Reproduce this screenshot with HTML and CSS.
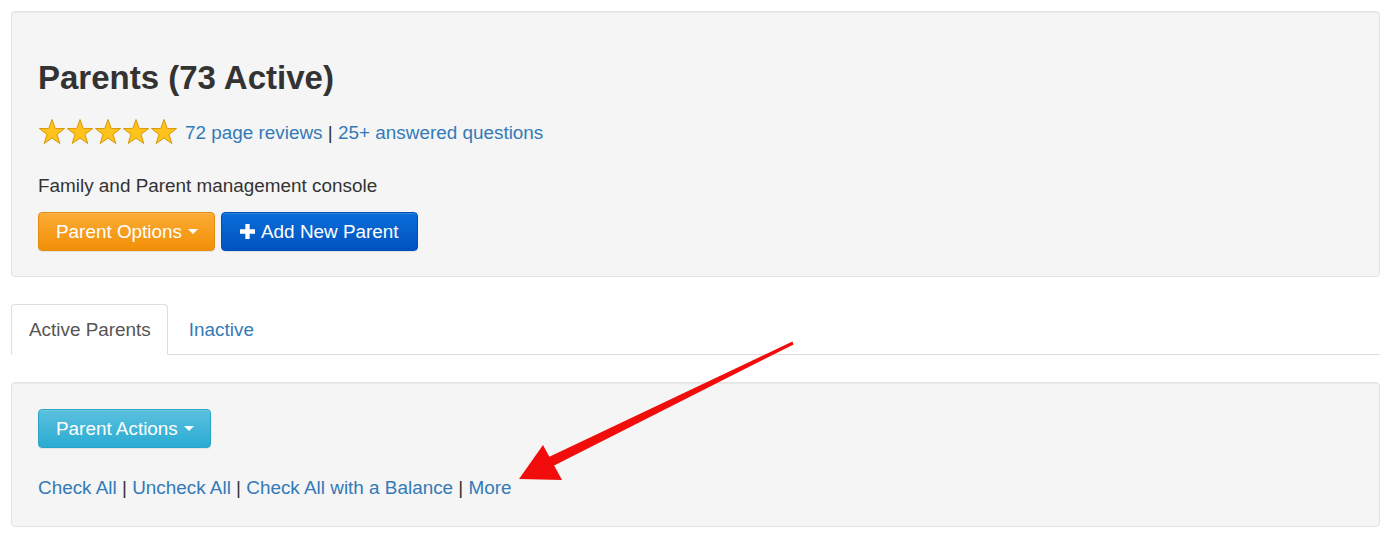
FILE: index.html
```html
<!DOCTYPE html>
<html lang="en">
<head>
    <meta charset="UTF-8">
    <title>Parents</title>
    <meta name="viewport" content="width=device-width, initial-scale=1.0">
    <link rel="stylesheet" href="styles.css">
</head>
<body>
    <div class="page">
        <!-- Header Well -->
        <section class="well well-header">
            <h2 class="page-title">Parents (73 Active)</h2>
            <div class="rating">
                <span class="stars">
                    <svg class="star" viewBox="0 0 28 28"><polygon points="14,1.5 17.2,10.4 26.6,10.6 19.1,16.4 21.8,25.5 14,20.1 6.2,25.5 8.9,16.4 1.4,10.6 10.8,10.4"/></svg>
                    <svg class="star" viewBox="0 0 28 28"><polygon points="14,1.5 17.2,10.4 26.6,10.6 19.1,16.4 21.8,25.5 14,20.1 6.2,25.5 8.9,16.4 1.4,10.6 10.8,10.4"/></svg>
                    <svg class="star" viewBox="0 0 28 28"><polygon points="14,1.5 17.2,10.4 26.6,10.6 19.1,16.4 21.8,25.5 14,20.1 6.2,25.5 8.9,16.4 1.4,10.6 10.8,10.4"/></svg>
                    <svg class="star" viewBox="0 0 28 28"><polygon points="14,1.5 17.2,10.4 26.6,10.6 19.1,16.4 21.8,25.5 14,20.1 6.2,25.5 8.9,16.4 1.4,10.6 10.8,10.4"/></svg>
                    <svg class="star" viewBox="0 0 28 28"><polygon points="14,1.5 17.2,10.4 26.6,10.6 19.1,16.4 21.8,25.5 14,20.1 6.2,25.5 8.9,16.4 1.4,10.6 10.8,10.4"/></svg>
                </span>
                <a href="#">72 page reviews</a>&nbsp;|&nbsp;<a href="#">25+ answered questions</a>
            </div>
            <p class="subtitle">Family and Parent management console</p>
            <div class="btn-row">
                <button class="btn btn-warning">Parent Options <span class="caret"></span></button>
                <button class="btn btn-primary">
                    <svg class="icon-plus" viewBox="0 0 14 14"><path d="M5 0h4v5h5v4H9v5H5V9H0V5h5z"/></svg>
                    Add New Parent
                </button>
            </div>
        </section>

        <!-- Tabs -->
        <ul class="nav-tabs">
            <li class="active"><a href="#">Active Parents</a></li>
            <li><a href="#">Inactive</a></li>
        </ul>

        <!-- Actions Well -->
        <section class="well well-actions">
            <button class="btn btn-info">Parent Actions <span class="caret"></span></button>
            <div class="check-links">
                <a href="#">Check All</a> | <a href="#">Uncheck All</a> | <a href="#">Check All with a Balance</a> | <a href="#">More</a>
            </div>
        </section>
    </div>

    <!-- Annotation arrow -->
    <svg class="annotation" width="1390" height="534" viewBox="0 0 1390 534">
        <polygon fill="#f20d0d" points="793.6,344.4 792.4,341.6 547.8,457.6 552.2,466.4"/>
        <polygon fill="#f20d0d" points="519,479 543,445 562,480"/>
    </svg>
</body>
</html>
```

FILE: styles.css
```css
:root {
    --color-text: #333;
    --color-link: #337ab7;
    --color-well: #f5f5f5;
    --color-well-border: #e3e3e3;
    --radius-base: 4px;
}

html, body {
    margin: 0;
    padding: 0;
    background: #fff;
}

body {
    font-family: "Liberation Sans", Arial, sans-serif;
    font-size: 18.9px;
    line-height: 27px;
    color: var(--color-text);
}

a {
    color: var(--color-link);
    text-decoration: none;
}

.page {
    padding: 11px 10px 0 11px;
}

/* Wells */
.well {
    background: var(--color-well);
    border: 1px solid var(--color-well-border);
    border-radius: var(--radius-base);
    box-shadow: inset 0 1px 1px rgba(0,0,0,0.05);
    padding: 26px 26px 25px;
}

.page-title {
    margin: 22px 0 0;
    font-size: 33px;
    line-height: 36px;
    font-weight: bold;
    color: #333;
}

/* Rating */
.rating {
    display: flex;
    align-items: center;
    height: 28px;
    margin-top: 22px;
    white-space: pre;
}

.stars {
    display: flex;
    margin-right: 7px;
}

.star {
    width: 28px;
    height: 28px;
    fill: #fdc21c;
    stroke: #d99a0b;
    stroke-width: 1;
}

.subtitle {
    margin: 26px 0 13px;
}

/* Buttons */
.btn-row {
    display: flex;
    gap: 6px;
}

.btn {
    font-family: inherit;
    font-size: 18.9px;
    line-height: 25px;
    padding: 6px 16px 6px 17px;
    border: 1px solid transparent;
    border-radius: var(--radius-base);
    color: #fff;
    display: inline-flex;
    align-items: center;
    box-shadow: inset 0 1px 0 rgba(255,255,255,0.15), 0 1px 1px rgba(0,0,0,0.075);
    cursor: pointer;
}

.btn-warning {
    background: linear-gradient(#fbab35, #f29007);
    border-color: #e48a0c;
}

.btn-primary {
    background: linear-gradient(#0b6fd9, #0052c0);
    border-color: #004eb5;
    padding-left: 18px;
    padding-right: 18px;
}

.btn-info {
    background: linear-gradient(#5bc0de, #2aabd2);
    border-color: #28a4c9;
}

.caret {
    display: inline-block;
    width: 0;
    height: 0;
    margin-left: 6px;
    border-top: 5px solid #fff;
    border-left: 5px solid transparent;
    border-right: 5px solid transparent;
}

.icon-plus {
    width: 15px;
    height: 15px;
    fill: #fff;
    margin-right: 6px;
}

/* Tabs */
.nav-tabs {
    list-style: none;
    margin: 27px 0 27px;
    padding: 0;
    display: flex;
    border-bottom: 1px solid #ddd;
}

.nav-tabs li {
    margin-bottom: -1px;
    margin-right: 2px;
}

.nav-tabs a {
    display: block;
    padding: 11px 16px 11px 17px;
    border: 1px solid transparent;
    border-radius: var(--radius-base) var(--radius-base) 0 0;
}

.nav-tabs li:not(.active) a {
    padding-left: 18px;
}

.nav-tabs .active a {
    color: #555;
    background: #fff;
    border-color: #ddd #ddd transparent;
}

/* Actions */
.check-links {
    margin-top: 26px;
}

/* Annotation overlay */
.annotation {
    position: absolute;
    left: 0;
    top: 0;
    pointer-events: none;
}
```
